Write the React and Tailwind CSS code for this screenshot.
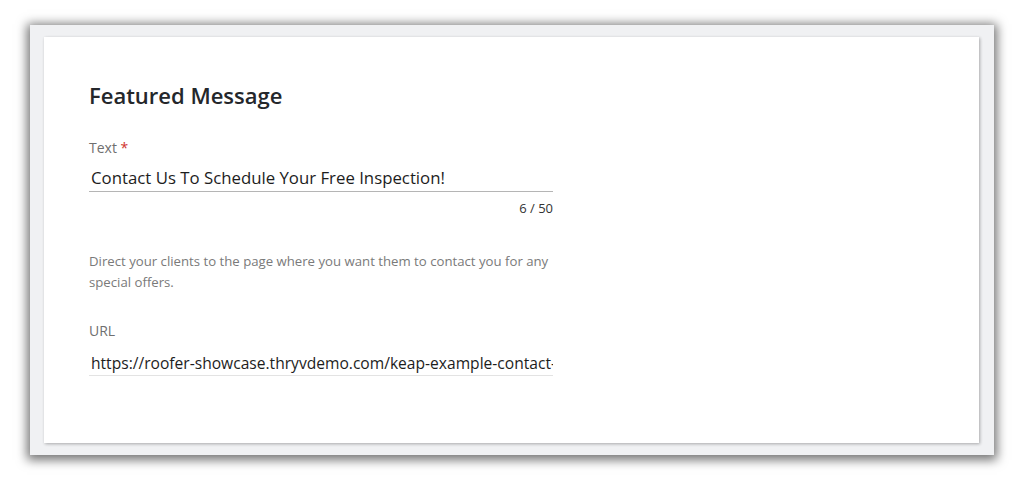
export default function App() {
  return (
    <div className="w-[1026px] h-[484px] bg-white pt-[25px] pl-[30px]" style={{ fontFamily: '"Open Sans", sans-serif' }}>
      <div className="w-[964px] h-[430px] bg-[#f0f1f3] pt-[12px] pl-[14px] shadow-[0_2px_10px_3px_rgba(0,0,0,0.55)]">
        <div className="w-[935px] h-[406px] bg-white shadow-[1px_1px_3px_rgba(0,0,0,0.3)] pl-[45px] pt-[43px]">
          <h1 className="text-[22px] leading-[30px] font-semibold text-[#24272b]">Featured Message</h1>
          <div className="w-[464px] mt-[28px]">
            <div className="text-[14px] leading-[20px] text-[#6f6f6f]">
              Text <span className="text-[#d0342c]">*</span>
            </div>
            <div className="mt-[10px] border-b border-[#b5b5b5] pl-[2px] pb-[3px] text-[16.8px] leading-[20px] text-[#1d1d1d]">
              Contact Us To Schedule Your Free Inspection!
            </div>
            <div className="text-right text-[13px] leading-[18px] mt-[7px] text-[#333]">6 / 50</div>
            <p className="mt-[34px] text-[13.2px] leading-[21px] text-[#7a7a7a]">
              Direct your clients to the page where you want them to contact you for any special offers.
            </p>
            <div className="mt-[28px] text-[14px] leading-[20px] text-[#6f6f6f]">URL</div>
            <div className="mt-[12px] border-b border-[#e3e3e3] pl-[2px] pb-[2px] text-[15.6px] leading-[20px] text-[#1d1d1d] whitespace-nowrap overflow-hidden">
              https://roofer-showcase.thryvdemo.com/keap-example-contact-form
            </div>
          </div>
        </div>
      </div>
    </div>
  );
}
